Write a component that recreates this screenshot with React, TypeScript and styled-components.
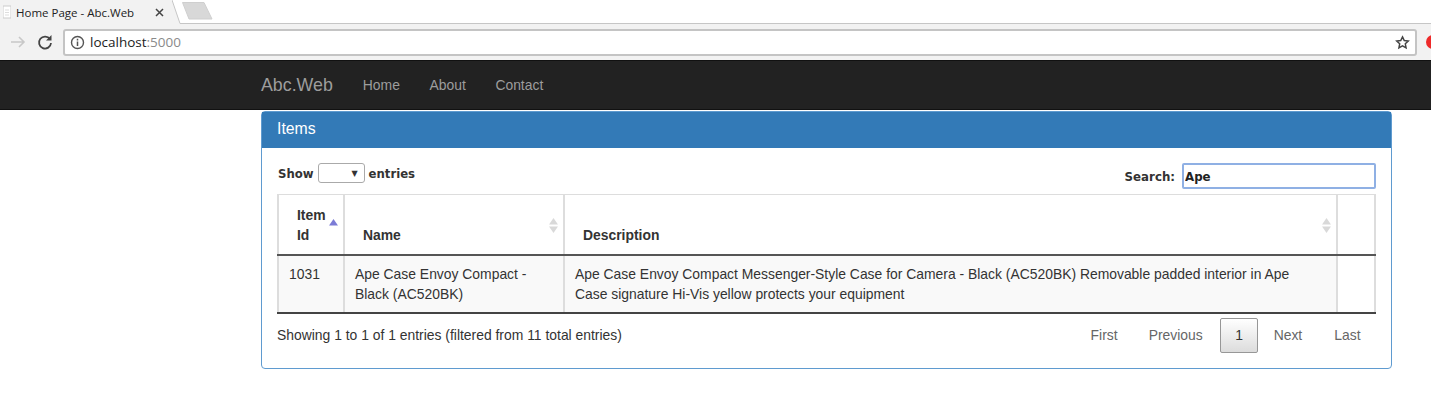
import styled, { createGlobalStyle } from "styled-components";

const GlobalStyle = createGlobalStyle`
  html, body {
    margin: 0;
    padding: 0;
    background: #fff;
    overflow: hidden;
  }
  body {
    font-family: "Liberation Sans", Arial, sans-serif;
    font-size: 13.9px;
    color: #333;
  }
`;

const Page = styled.div`
  width: 1431px;
  height: 407px;
  overflow: hidden;
`;

const TabStrip = styled.div`
  display: flex;
  height: 24px;
  align-items: stretch;
`;

const Tab = styled.div`
  width: 172px;
  background: #f2f2f2;
  display: flex;
  align-items: center;
  font-family: "Open Sans", sans-serif;
  font-size: 11.5px;
  color: #222;
  padding-left: 3px;
  box-sizing: border-box;
  gap: 5px;
`;

const TabTitle = styled.span`
  flex: 1;
  white-space: nowrap;
`;

const TabClose = styled.svg`
  width: 9px;
  height: 9px;
  margin-right: 8px;
`;

const StripRest = styled.div`
  flex: 1;
  display: flex;
  border-bottom: 1px solid #c6c6c6;
  padding-top: 2px;
  box-sizing: border-box;
`;

const Toolbar = styled.div`
  height: 36px;
  background: #f2f2f2;
  display: flex;
  align-items: center;
  padding-left: 9px;
  box-sizing: border-box;
  overflow: hidden;
`;

const NavIcon = styled.svg`
  width: 18px;
  height: 18px;
  flex: none;
  margin-right: 9px;
`;

const AddressBar = styled.div`
  width: 1354px;
  height: 27px;
  flex: none;
  background: #fff;
  border: 2px solid #c4c4c4;
  border-radius: 3px;
  box-sizing: border-box;
  display: flex;
  align-items: center;
  padding: 0 5px 0 5px;
  font-family: "Open Sans", sans-serif;
  font-size: 13.5px;
  color: #222;
`;

const Port = styled.span`
  color: #8a8a8a;
`;

const Url = styled.span`
  flex: 1;
  margin-left: 5px;
`;

const RecordDot = styled.span`
  width: 14px;
  height: 14px;
  flex: none;
  border-radius: 50%;
  background: #ee2a2a;
  margin-left: 9px;
`;

const Navbar = styled.nav`
  height: 50px;
  background: #222;
  border-top: 1px solid #111;
  border-bottom: 1px solid #111;
  box-sizing: border-box;
  display: flex;
  align-items: center;
  padding-left: 261px;
`;

const Brand = styled.a`
  font-size: 17.8px;
  color: #9d9d9d;
  margin-right: 30px;
`;

const NavLink = styled.a`
  font-size: 13.9px;
  color: #9d9d9d;
  margin-right: 29.6px;
`;

const Panel = styled.section`
  width: 1131px;
  height: 258px;
  margin: 1px 0 0 261px;
  border: 1px solid #5f9bd0;
  border-radius: 4px;
  box-sizing: border-box;
`;

const PanelHeading = styled.header`
  height: 36px;
  background: #337ab7;
  color: #fff;
  font-size: 15.8px;
  display: flex;
  align-items: center;
  padding-left: 15px;
  padding-bottom: 2px;
  box-sizing: border-box;
`;

const PanelBody = styled.div`
  padding: 15px 15px 0 15px;
`;

const Controls = styled.div`
  display: flex;
  justify-content: space-between;
  height: 31px;
  padding-left: 1px;
`;

const LengthLabel = styled.label`
  display: flex;
  align-items: center;
  gap: 4px;
  height: 22px;
  font-weight: 700;
  font-family: "DejaVu Sans", sans-serif;
  font-size: 11.7px;
`;

const FakeSelect = styled.span`
  width: 47px;
  height: 20px;
  margin-bottom: 2px;
  border: 1px solid #aaa;
  border-radius: 3px;
  box-sizing: border-box;
  background: #fff;
  display: flex;
  align-items: center;
  justify-content: flex-end;
  padding-right: 6px;
  font-size: 8px;
  color: #333;
`;

const SearchLabel = styled.label`
  display: flex;
  align-items: center;
  gap: 7px;
  height: 28px;
  font-weight: 700;
  font-family: "DejaVu Sans", sans-serif;
  font-size: 11.8px;
`;

const SearchInput = styled.input`
  width: 194px;
  height: 26px;
  margin-bottom: 2px;
  box-sizing: border-box;
  border: 2px solid #8fb0e4;
  border-radius: 2px;
  outline: none;
  padding: 2px 1px 0;
  font-weight: 700;
  font-family: "DejaVu Sans", sans-serif;
  font-size: 11.8px;
  color: #222;
`;

const DataTable = styled.table`
  width: 1097px;
  table-layout: fixed;
  border-collapse: collapse;
`;

const HeadCell = styled.th<{ $w: number; $pad: number }>`
  width: ${(p) => p.$w}px;
  height: 60px;
  box-sizing: border-box;
  position: relative;
  border: 2px solid #ddd;
  border-top-width: 1px;
  border-bottom: 2px solid #555;
  padding: 9px 18px 9px ${(p) => p.$pad}px;
  text-align: left;
  vertical-align: bottom;
  font-weight: 700;
  font-size: 13.9px;
  line-height: 20px;
  color: #333;
`;

const SortIcon = styled.svg`
  position: absolute;
  right: 5px;
  top: 23px;
  width: 9px;
  height: 15px;
`;

const BodyRow = styled.tr`
  background: #f9f9f9;
`;

const BodyCell = styled.td<{ $blank?: boolean; $padRight?: number }>`
  height: 56px;
  box-sizing: border-box;
  border-left: 2px solid #ddd;
  border-right: 2px solid #ddd;
  border-bottom: 2px solid #444;
  padding: 8px ${(p) => p.$padRight ?? 10}px 8px 10px;
  vertical-align: top;
  line-height: 20px;
  background: ${(p) => (p.$blank ? "#fff" : "transparent")};
`;

const Footer = styled.div`
  display: flex;
  justify-content: space-between;
  padding-top: 4px;
`;

const Info = styled.div`
  padding-top: 7px;
  line-height: 20px;
`;

const Pager = styled.div`
  display: flex;
  align-items: center;
  color: #666;
  height: 35px;
`;

const PageLink = styled.a`
  padding: 0 16.5px 0 14.5px;
  &:last-child {
    padding: 0 15.5px;
  }
`;

const CurrentPage = styled.a`
  width: 38px;
  height: 35px;
  box-sizing: border-box;
  display: flex;
  align-items: center;
  justify-content: center;
  color: #333;
  border: 1px solid #979797;
  border-radius: 2px;
  background: linear-gradient(#fff, #dcdcdc);
  margin: 0 1px;
`;

const sortArrows = (
  <SortIcon viewBox="0 0 9 15">
    <polygon points="4.5,0 9,6.5 0,6.5" fill="#d9d9d9" />
    <polygon points="0,8.5 9,8.5 4.5,15" fill="#d9d9d9" />
  </SortIcon>
);

const App = () => {
  return (
    <Page>
      <GlobalStyle />
      <TabStrip>
        <Tab>
          <svg width="8" height="14" viewBox="0 0 8 14">
            <rect x="0" y="1" width="8" height="12" fill="#fff" stroke="#ccc" />
            <path d="M2 5h4M2 7.5h4M2 10h4" stroke="#ddd" />
          </svg>
          <TabTitle>Home Page - Abc.Web</TabTitle>
          <TabClose viewBox="0 0 9 9">
            <path d="M1 1l7 7M8 1L1 8" stroke="#444" strokeWidth="1.5" />
          </TabClose>
        </Tab>
        <svg width="10" height="24" viewBox="0 0 10 24">
          <path d="M0 0L8 23.5H10V24H0Z" fill="#f2f2f2" />
          <path d="M0 0L8 23.5H10" fill="none" stroke="#c6c6c6" />
        </svg>
        <StripRest>
          <svg width="32" height="18" viewBox="0 0 32 18">
            <path d="M0.5 0.5H22L30 17H7Z" fill="#d8d8d8" stroke="#cfcfcf" />
          </svg>
        </StripRest>
      </TabStrip>
      <Toolbar>
        <NavIcon viewBox="0 0 18 18">
          <path d="M2 9h13M10 4l5 5-5 5" fill="none" stroke="#c8c8c8" strokeWidth="1.6" />
        </NavIcon>
        <NavIcon viewBox="0 0 18 18">
          <path d="M14 6.2A6 6 0 1 0 15 10" fill="none" stroke="#444" strokeWidth="1.8" />
          <path d="M15.5 2v5.5H10z" fill="#444" />
        </NavIcon>
        <AddressBar>
          <svg width="15" height="15" viewBox="0 0 15 15">
            <circle cx="7.5" cy="7.5" r="6" fill="none" stroke="#555" strokeWidth="1.4" />
            <path d="M7.5 6.5v4.5M7.5 3.8v1.6" stroke="#555" strokeWidth="1.5" />
          </svg>
          <Url>
            localhost<Port>:5000</Port>
          </Url>
          <svg width="15" height="15" viewBox="0 0 24 24">
            <path
              d="M12 3l2.8 5.9 6.4.8-4.7 4.4 1.2 6.4L12 17.4l-5.7 3.1 1.2-6.4-4.7-4.4 6.4-.8z"
              fill="none"
              stroke="#444"
              strokeWidth="2.4"
            />
          </svg>
        </AddressBar>
        <RecordDot />
      </Toolbar>
      <Navbar>
        <Brand>Abc.Web</Brand>
        <NavLink>Home</NavLink>
        <NavLink>About</NavLink>
        <NavLink>Contact</NavLink>
      </Navbar>
      <Panel>
        <PanelHeading>Items</PanelHeading>
        <PanelBody>
          <Controls>
            <LengthLabel>
              Show
              <FakeSelect>▼</FakeSelect>
              entries
            </LengthLabel>
            <SearchLabel>
              Search:
              <SearchInput defaultValue="Ape" />
            </SearchLabel>
          </Controls>
          <DataTable>
            <thead>
              <tr>
                <HeadCell $w={66} $pad={18}>
                  Item Id
                  <SortIcon viewBox="0 0 9 15">
                    <polygon points="4.5,1 9,7.5 0,7.5" fill="#7b7bd6" />
                  </SortIcon>
                </HeadCell>
                <HeadCell $w={220} $pad={18}>
                  Name
                  {sortArrows}
                </HeadCell>
                <HeadCell $w={773} $pad={18}>
                  Description
                  {sortArrows}
                </HeadCell>
                <HeadCell $w={38} $pad={8} />
              </tr>
            </thead>
            <tbody>
              <BodyRow>
                <BodyCell>1031</BodyCell>
                <BodyCell>Ape Case Envoy Compact - Black (AC520BK)</BodyCell>
                <BodyCell $padRight={30}>
                  Ape Case Envoy Compact Messenger-Style Case for Camera - Black (AC520BK) Removable padded interior in
                  Ape Case signature Hi-Vis yellow protects your equipment
                </BodyCell>
                <BodyCell $blank />
              </BodyRow>
            </tbody>
          </DataTable>
          <Footer>
            <Info>Showing 1 to 1 of 1 entries (filtered from 11 total entries)</Info>
            <Pager>
              <PageLink>First</PageLink>
              <PageLink>Previous</PageLink>
              <CurrentPage>1</CurrentPage>
              <PageLink>Next</PageLink>
              <PageLink>Last</PageLink>
            </Pager>
          </Footer>
        </PanelBody>
      </Panel>
    </Page>
  );
};

export default App;
